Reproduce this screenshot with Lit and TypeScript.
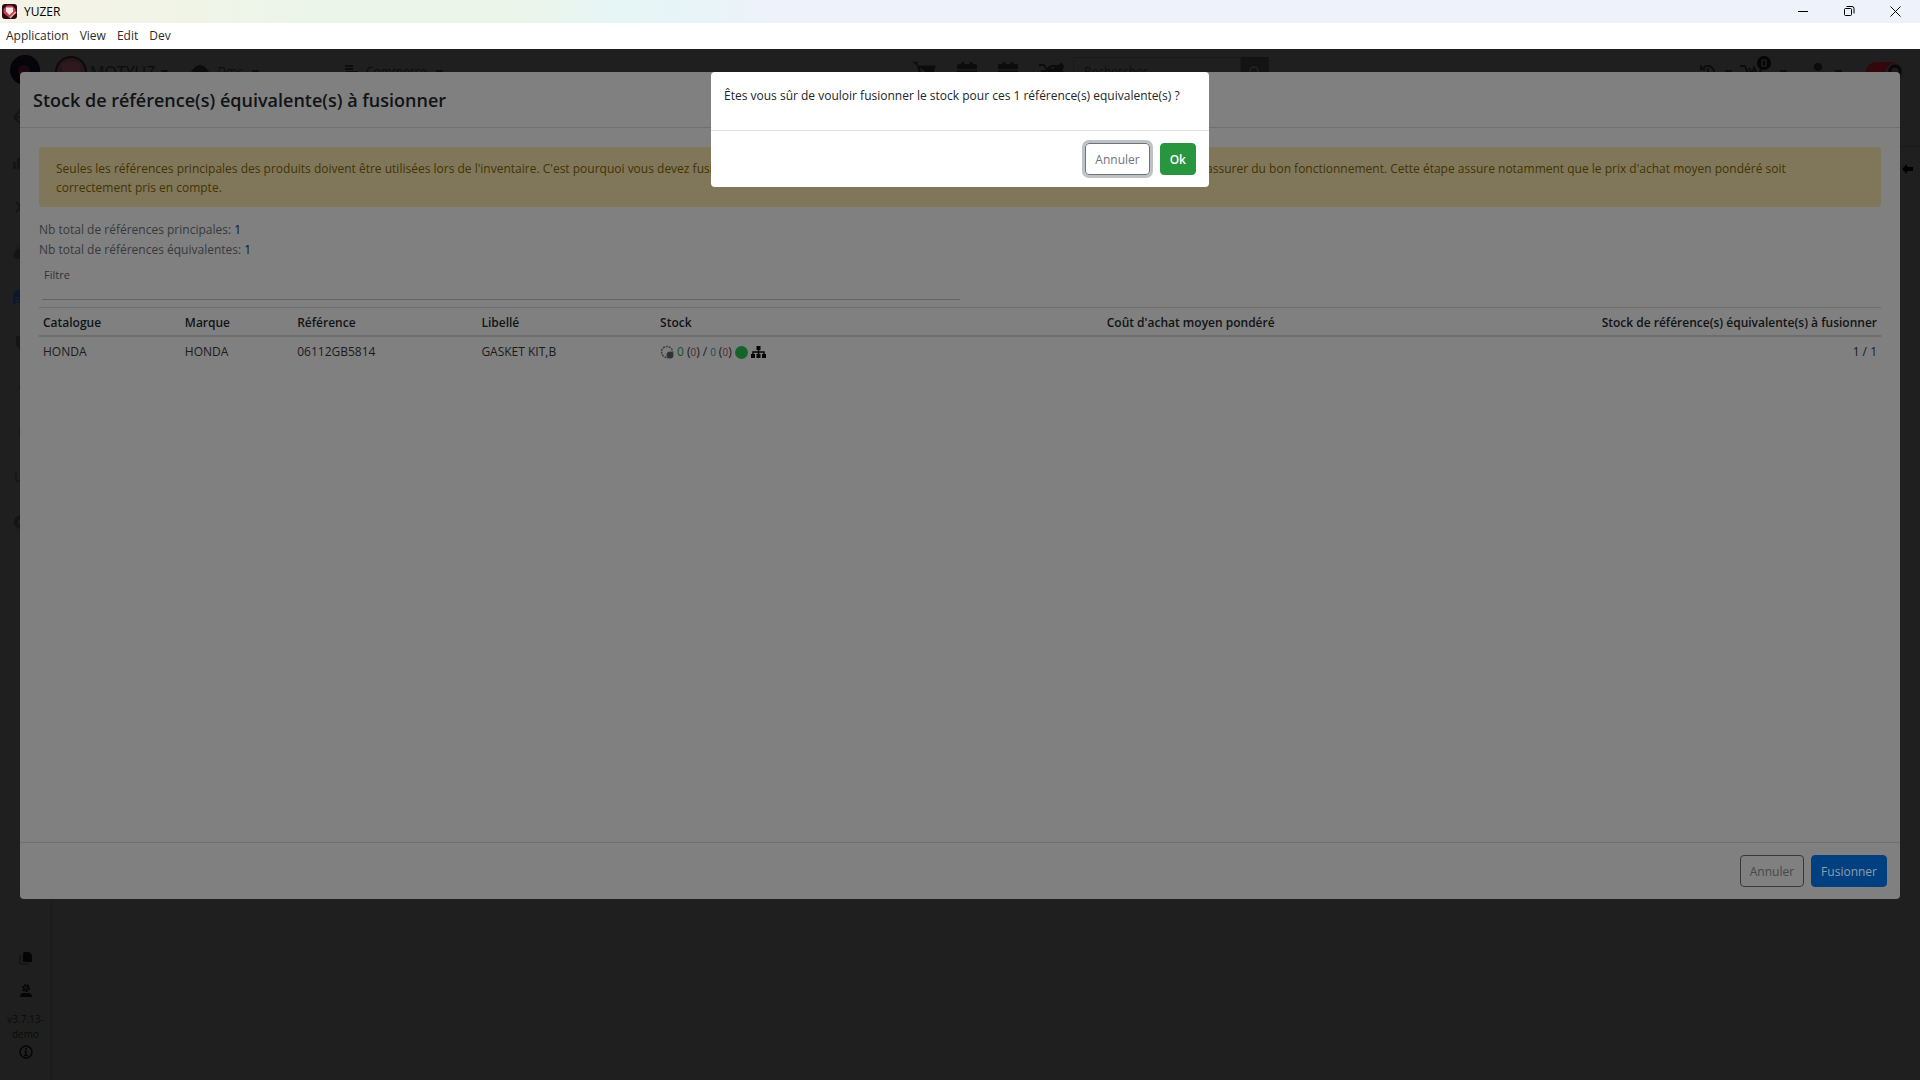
import { LitElement, html, css, svg } from "lit";
import { customElement } from "lit/decorators.js";

const cart = svg`<path d="M0 1h3l3 12h10M5 4h13l-2 7H6z" fill="currentColor" stroke="currentColor" stroke-width="1"/><circle cx="7" cy="16" r="2" fill="currentColor"/><circle cx="15" cy="16" r="2" fill="currentColor"/>`;
const calendar = svg`<path d="M0 4a2 2 0 0 1 2-2h2V0h3v2h5V0h3v2h2a2 2 0 0 1 2 2v3H0zM0 8h19v9a2 2 0 0 1-2 2H2a2 2 0 0 1-2-2z" fill="currentColor"/>`;
const caret = html`<svg class="caret" width="9" height="5" viewBox="0 0 8 5"><path d="M0 0h8L4 5z" fill="currentColor"/></svg>`;

const navIcons = [
  svg`<path d="M7 2 1 8l6 6M1 8h14" fill="none" stroke="currentColor" stroke-width="2"/>`,
  svg`<path d="M0 8h3v7H0zM4 4h4v11H4zM9 1h4v14H9z" fill="currentColor"/>`,
  svg`<path d="m3 3 5 5-5 5M9 13h6" fill="none" stroke="currentColor" stroke-width="2"/>`,
  svg`<path d="M1 9 6 2v3h4v10H4a4 4 0 0 1-3-6z" fill="currentColor"/>`,
  svg`<path d="M0 15V5l4-4h8l4 4v10h-3V8H3v7zM4 9h8v2H4zM4 12h8v2H4z" fill="currentColor"/>`,
  svg`<path d="M3 2h11v13H6l-3-4z" fill="currentColor"/>`,
  svg`<circle cx="9" cy="8" r="3" fill="currentColor"/>`,
  svg`<circle cx="9" cy="8" r="3" fill="currentColor"/>`,
  svg`<path d="M3 3v9h12" fill="none" stroke="currentColor" stroke-width="1"/>`,
  svg`<circle cx="8" cy="8" r="5" fill="none" stroke="currentColor" stroke-width="4"/>`,
];

@customElement("app-root")
export class AppRoot extends LitElement {
  static styles = css`
    :host {
      display: flex;
      flex-direction: column;
      min-height: 100vh;
      font-family: "Open Sans", "Noto Sans", sans-serif;
      font-size: 12px;
      line-height: 20px;
      color: #111315;
      background: #1f1f1f;
    }
    * { box-sizing: border-box; }
    button, input { font: inherit; }
    button { cursor: pointer; }
    svg { display: block; flex: none; }
    p { margin: 0; }

    .titlebar {
      display: flex;
      align-items: center;
      height: 23px;
      padding-left: 2px;
      color: #000;
      background: linear-gradient(90deg, #f4f3e6 0, #f1f4e6 160px, #ecf5ea 300px, #ecf5ea 520px, #e6f5f6 620px, #e8f4f8 700px, #eef2fb 780px);
    }
    .titlebar .name { margin-left: 6px; }
    .window { display: flex; margin-left: auto; padding-right: 2px; }
    .window button {
      display: grid;
      place-items: center;
      width: 46px;
      height: 20px;
      padding: 0;
      border: 0;
      background: none;
      color: #000;
    }
    .menu {
      display: flex;
      gap: 11px;
      align-items: center;
      height: 26px;
      padding-left: 6px;
      background: #fff;
    }
    .menu button { padding: 0; border: 0; background: none; color: #2b2b2b; }

    .app { position: relative; flex: 1; display: flex; flex-direction: column; color: #0c0c0c; }
    .topbar { display: flex; align-items: center; height: 46px; padding: 0 16px 0 10px; overflow: hidden; }
    .left { display: flex; align-items: center; flex: 0 0 48%; margin-right: -7px; }
    .brand { margin: 0 5px 0 3px; font-size: 16px; }
    .entry { display: flex; align-items: center; gap: 8px; margin-left: 22px; }
    .entry.far { margin-left: 84px; }
    .quick { display: flex; align-items: center; gap: 21px; }
    .search { display: flex; height: 30px; width: 196px; margin-left: -13px; }
    .search input { flex: 1; min-width: 0; padding: 0 10px; border: 1px solid #191919; background: none; }
    .search input::placeholder { color: #0e0e0e; opacity: 1; }
    .search button { display: grid; place-items: center; width: 28px; padding: 0; border: 0; background: #131313; color: #202020; }
    .right { display: flex; align-items: center; gap: 7px; margin-left: auto; }
    .right .user { margin-left: 14px; }
    .right .toggle { margin-left: 16px; }

    .workspace { flex: 1; display: flex; }
    .sidebar {
      display: flex;
      flex-direction: column;
      width: 52px;
      padding: 14px 0 21px;
      border-right: 1px solid #1a1a1a;
    }
    .nav { display: flex; flex-direction: column; gap: 29px; padding-left: 13px; color: #151515; }
    .nav .on { color: #061a33; }
    .tools { display: flex; flex-direction: column; align-items: center; margin-top: auto; color: #050505; }
    .tools svg + svg { margin-top: 19px; }
    .version { margin: 14px 0 3px; font-size: 10px; line-height: 15px; text-align: center; color: #0b0b0b; }
    .page { flex: 1; margin-top: 51px; border-top: 1px solid #1a1a1a; display: flex; justify-content: flex-end; padding: 16px 7px; color: #000; }

    .layer { position: absolute; inset: 0; padding: 23px 20px; }
    .modal { display: flex; flex-direction: column; min-height: calc(100vh - 253px); border-radius: 4px; background: #808080; color: #111315; }
    .modal header { padding: 17px 13px 16px; border-bottom: 1px solid #6f7072; }
    h1 { margin: 0; font-size: 18px; line-height: 22px; font-weight: 600; }
    .body { flex: 1; padding: 19px; }
    .alert { padding: 12px 17px 10px; border-radius: 4px; background: #80775b; color: #423302; line-height: 19px; }
    .counts { margin-top: 13px; color: #36393c; }
    .counts b { font-weight: 400; color: #111315; }
    .filter { display: flex; flex-direction: column; width: 50%; padding-left: 3px; margin-top: 6px; }
    .filter label { padding-left: 2px; font-size: 11px; line-height: 18px; color: #303336; }
    .filter input { height: 16px; padding: 0 2px; border: 0; border-bottom: 1px solid #626466; background: none; outline: 0; }
    table { width: 100%; margin-top: 7px; border-collapse: collapse; table-layout: fixed; }
    th { height: 28px; padding: 5px 4px 1px; border-top: 1px solid #6b6d6f; border-bottom: 2px solid #6b6d6f; font-weight: 600; text-align: left; white-space: nowrap; }
    td { height: 30px; padding: 2px 4px 0; color: #191b1d; }
    .num { text-align: right; }
    .c1 { width: 7.7%; } .c2 { width: 6.1%; } .c3 { width: 10%; } .c4 { width: 9.7%; } .c5 { width: 14%; } .c6 { width: 19.8%; }
    .stock { display: flex; align-items: center; gap: 3px; }
    .green { color: #145322; } .teal { color: #0c505c; } .red { color: #6e1b23; }
    .small { font-size: 10px; }

    footer { display: flex; justify-content: flex-end; gap: 7px; padding: 12px 13px; border-top: 1px solid #6f7072; }
    .btn { height: 32px; padding: 2px 9px 0; border: 1px solid; border-radius: 4px; background: none; }
    .modal .cancel { border-color: #36393c; color: #44484b; }
    .modal .merge { border-color: #004080; background: #004080; color: #909caa; font-weight: 500; }

    .confirm { max-width: 498px; margin: 0 auto; border-radius: 4px; background: #fff; color: #212529; }
    .confirm p { padding: 14px 13px 24px; }
    .confirm footer { gap: 10px; border-top-color: #dee2e6; }
    .confirm .cancel { border-color: #6c757d; color: #6c757d; outline: 0; box-shadow: 0 0 0 3px #bfc2c5; }
    .confirm .ok { border-color: #28963f; background: #28963f; color: #fff; font-weight: 600; }
  `;

  render() {
    return html`
      <div class="titlebar">
        <svg width="16" height="16" viewBox="0 0 16 16">
          <rect x="0" y="0" width="15" height="15" rx="3" fill="#2a0a18"/>
          <path d="M5 1.500h5L13.500 5v4L7.500 14 1.500 9V5z" fill="#c9404f"/>
          <path d="M4 3.500h7v4L7.500 11 4 7.500z" fill="#fbe6e4"/>
          <path d="m8 14 6-6" stroke="#f0b0a0" stroke-width="1.500"/>
        </svg>
        <span class="name">YUZER</span>
        <div class="window">
          <button aria-label="Minimize"><svg width="11" height="11" viewBox="0 0 11 11"><path d="M0 5.500h10" stroke="currentColor"/></svg></button>
          <button aria-label="Restore"><svg width="11" height="11" viewBox="0 0 11 11" fill="none" stroke="currentColor"><rect x=".5" y="2.500" width="7" height="7" rx="1"/><path d="M2.500.5H8a2 2 0 0 1 2 2v5"/></svg></button>
          <button aria-label="Close"><svg width="11" height="11" viewBox="0 0 11 11"><path d="m.5.5 10 10M10.500.5l-10 10" stroke="currentColor"/></svg></button>
        </div>
      </div>
      <nav class="menu">
        <button>Application</button><button>View</button><button>Edit</button><button>Dev</button>
      </nav>

      <div class="app">
        <div class="topbar">
          <div class="left">
            <svg width="45" height="34" viewBox="0 0 45 34"><circle cx="15" cy="15" r="15" fill="#06030a"/><circle cx="14" cy="16" r="6" fill="#1a0a10"/></svg>
            <svg width="32" height="32" viewBox="0 0 32 32"><circle cx="16" cy="16" r="15" fill="#24171a" stroke="#0a0a0a" stroke-width="2"/><path d="M6 9q10-8 20 0l-4 14H10z" fill="#2e1a1e"/></svg>
            <span class="brand">MOTYUZ</span>${caret}
            <div class="entry"><svg width="18" height="14" viewBox="0 0 18 14"><path d="M0 7q9-14 18 0-9 14-18 0z" fill="currentColor"/></svg><span>Dms</span>${caret}</div>
            <div class="entry far"><svg width="14" height="14" viewBox="0 0 14 14"><path d="M1 1h8M1 4h8M3 7h10v6H3z" stroke="currentColor" stroke-width="2" fill="none"/></svg><span>Commerce</span>${caret}</div>
          </div>
          <div class="quick">
            <svg width="24" height="22" viewBox="-1 0 20 18">${cart}</svg>
            <svg width="20" height="20" viewBox="0 0 19 19">${calendar}</svg>
            <svg width="20" height="20" viewBox="0 0 19 19">${calendar}</svg>
            <svg width="26" height="18" viewBox="0 0 26 18"><path d="M0 2h5l3 5 4-4h8l2-2 2 2-1 3" fill="none" stroke="currentColor" stroke-width="2"/><path d="M9 3l5 3 3-4h5l2 4-3 6H9z" fill="currentColor"/><circle cx="5" cy="12" r="4" fill="none" stroke="currentColor" stroke-width="2"/><circle cx="21" cy="12" r="4" fill="none" stroke="currentColor" stroke-width="2"/></svg>
            <div class="search"><input aria-label="Rechercher" placeholder="Rechercher"><button aria-label="Lancer la recherche"><svg width="12" height="12" viewBox="0 0 12 12"><circle cx="5" cy="5" r="4" fill="none" stroke="currentColor" stroke-width="2"/><path d="m8 8 4 4" stroke="currentColor" stroke-width="2"/></svg></button></div>
          </div>
          <div class="right">
            <svg width="18" height="16" viewBox="0 0 18 18" fill="none" stroke="currentColor" stroke-width="2"><path d="M3 5a7 7 0 1 1-1 6M1 1v5h5M9 5v5l3 2"/></svg>${caret}
            <svg width="32" height="34" viewBox="0 0 32 34"><path d="M0 11h5l4 10h10l2-7M9 13l3 6 2-6 3 6" fill="none" stroke="currentColor" stroke-width="2"/><circle cx="24" cy="8" r="7" fill="#050505"/><rect x="22" y="5" width="4" height="6" fill="none" stroke="#262626"/></svg>${caret}
            <svg class="user" width="18" height="18" viewBox="0 0 18 18"><circle cx="9" cy="4" r="4" fill="currentColor"/><path d="M1 17q0-8 8-8t8 8z" fill="currentColor"/></svg>${caret}
            <svg class="toggle" width="38" height="20" viewBox="0 0 38 20"><rect width="36" height="20" rx="10" fill="#35060c"/><circle cx="28" cy="10" r="9" fill="#1b1b1b"/><circle cx="29" cy="9" r="5" fill="none" stroke="#080808" stroke-width="3"/></svg>
          </div>
        </div>
        <div class="workspace">
          <aside class="sidebar">
            <div class="nav">
              ${navIcons.map((icon, i) => html`<svg class=${i === 4 ? "on" : "off"} width="16" height="16" viewBox="0 0 16 16">${icon}</svg>`)}
            </div>
            <div class="tools">
              <svg width="14" height="14" viewBox="0 0 14 14"><path d="M2 4H1v9h8v-1" fill="none" stroke="#111"/><path d="M5 1h5l3 3v7H4V2z" fill="currentColor"/></svg>
              <svg width="14" height="14" viewBox="0 0 14 14"><circle cx="7" cy="4" r="3" fill="#111" stroke="currentColor" stroke-width="2" stroke-dasharray="2 1"/><path d="M1 13q0-4 4-4h4q4 0 4 4z" fill="currentColor"/></svg>
              <div class="version">v3.7.13-<br>demo</div>
              <svg width="14" height="14" viewBox="0 0 14 14"><circle cx="7" cy="7" r="6" fill="none" stroke="currentColor" stroke-width="1.500"/><path d="M7 3v2M5.500 6.500H7V10M5 10.500h4" fill="none" stroke="currentColor" stroke-width="1.500"/></svg>
            </div>
          </aside>
          <div class="page"><svg width="12" height="12" viewBox="0 0 12 12"><path d="M6 1 1 6l5 5V8h6V4H6z" fill="currentColor"/></svg></div>
        </div>

        <div class="layer">
          <section class="modal" role="dialog" aria-labelledby="merge-title">
            <header><h1 id="merge-title">Stock de référence(s) équivalente(s) à fusionner</h1></header>
            <div class="body">
              <p class="alert">Seules les références principales des produits doivent être utilisées lors de l'inventaire. C'est pourquoi vous devez fusionner le stock de leurs références équivalentes avec les références principales, afin de s'assurer du bon fonctionnement. Cette étape assure notamment que le prix d'achat moyen pondéré soit correctement pris en compte.</p>
              <div class="counts">
                <div>Nb total de références principales: <b>1</b></div>
                <div>Nb total de références équivalentes: <b>1</b></div>
              </div>
              <div class="filter"><label for="filter">Filtre</label><input id="filter" type="text"></div>
              <table>
                <colgroup><col class="c1"><col class="c2"><col class="c3"><col class="c4"><col class="c5"><col class="c6"><col></colgroup>
                <thead><tr>
                  <th>Catalogue</th><th>Marque</th><th>Référence</th><th>Libellé</th><th>Stock</th>
                  <th class="num">Coût d'achat moyen pondéré</th><th class="num">Stock de référence(s) équivalente(s) à fusionner</th>
                </tr></thead>
                <tbody><tr>
                  <td>HONDA</td><td>HONDA</td><td>06112GB5814</td><td>GASKET KIT,B</td>
                  <td><div class="stock">
                    <svg width="14" height="14" viewBox="0 0 14 14"><circle cx="7" cy="7" r="5.500" fill="none" stroke="#3a3d40" stroke-width="1.500" stroke-dasharray="2 1"/><circle cx="10" cy="10" r="3.500" fill="#303336"/></svg>
                    <span class="green">0</span><span>(<span class="red small">0</span>)</span><span>/</span><span class="teal small">0</span><span>(<span class="red small">0</span>)</span>
                    <svg width="13" height="13" viewBox="0 0 13 13"><circle cx="6.500" cy="6.500" r="6.500" fill="#14642a"/></svg>
                    <svg width="15" height="12" viewBox="0 0 15 12"><path d="M5.500 0h4v4h-4zM0 8h4v4H0zM5.500 8h4v4h-4zM11 8h4v4h-4z" fill="#050505"/><path d="M7.500 3v6M2 9V6h11v3" fill="none" stroke="#050505" stroke-width="1.500"/></svg>
                  </div></td>
                  <td></td><td class="num">1 / 1</td>
                </tr></tbody>
              </table>
            </div>
            <footer><button class="btn cancel">Annuler</button><button class="btn merge">Fusionner</button></footer>
          </section>
        </div>

        <div class="layer">
          <section class="confirm" role="alertdialog" aria-labelledby="confirm-text">
            <p id="confirm-text">Êtes vous sûr de vouloir fusionner le stock pour ces 1 référence(s) equivalente(s) ?</p>
            <footer><button class="btn cancel">Annuler</button><button class="btn ok">Ok</button></footer>
          </section>
        </div>
      </div>
    `;
  }
}
